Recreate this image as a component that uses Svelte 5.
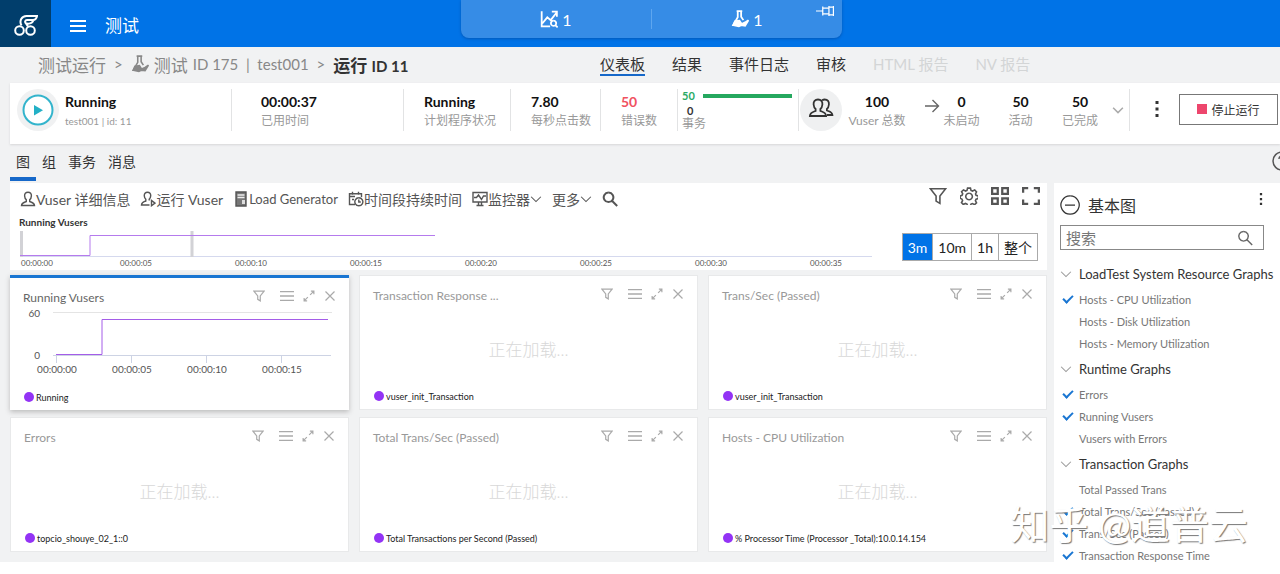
<script>
    const icons = {
        chart: "M1.5 1v13.5H9M2 12l4.5-5.5 3 2.5L15 2M10.5 1.5H15V6M12 9.5a2.3 2.3 0 1 0 .1 0M13.7 13.5l2 2",
        person: "M8 1.2c-2.3 0-3.6 1.5-3.4 3.7.1 1.7.7 3 1.7 3.8v1.8c-2 .9-4.6 1.2-4.8 4h13c-.2-2.8-2.8-3.1-4.8-4V8.7c1-.8 1.6-2.1 1.7-3.8.2-2.2-1.1-3.7-3.4-3.7z",
        vuser: "M9.5 14H1.5c.2-2.8 2.5-3.1 4.3-4V8.2C4.8 7.4 4.4 6.4 4.3 4.9 4.1 2.7 5.4 1.2 7.5 1.2s3.4 1.500 3.200 3.700C10.600 6.400 10.200 7.400 9.200 8.200v1.300M11.500 9.500v5.200l3.500-2.600z",
        calendar: "M7 13.5H1.5V2.8h12V6M4.5.8v3M10.5.8v3M2 5.5h5M4 8.5h2M10.8 6.800a4 4 0 1 0 .1 0M10.800 8.500v2.500h2",
        monitor: "M1 1.5h14v9.5H1zM4.5 14.500h7M6.500 11v3.500M9.500 11v3.500M2 6.500h2.500l2-2.500 3 4.500 2-3.500H14",
        search: "M6.5 1.5a4.8 4.8 0 1 0 .1 0M10.2 10l5 5",
        funnel: "M1.2 1.5h13.6L9.700 8v6.500l-3.400-2V8z",
        gear: "M6.7 1h2.6l.5 2 1.4.6 1.9-1 1.6 1.700-.9 1.900.5 1.200 2 .6v2.200l-2 .6-.6 1.400 1 1.800-1.700 1.700-1.900-1-1.300.5-.6 1.800H6.800l-.6-1.800-1.400-.6-1.800 1-1.700-1.700 1-1.800-.6-1.400-1.500-.6V8l1.600-.6.6-1.400-1-1.800L3.100 2.600l1.800 1L6.200 3zM8 5.500a2.900 2.900 0 1 0 .1 0",
        grid: "M1 1h5v5H1zM10 1h5v5h-5zM1 10h5v5H1zM10 10h5v5h-5z",
        full: "M1 5V1h4.500M10.500 1H15v4M15 11v4h-4.500M5.500 15H1v-4",
        menu: "M0 3h16M0 8h16M0 13h16",
        expand: "M9.5 6.500l5-5M10.500 1.500h4v4M6.500 9.500l-5 5M1.500 10.500v4h4",
        close: "M2 2l12 12M14 2L2 14",
        down: "M1.5 5L8 11.500 14.500 5",
        arrow: "M1 8h13.500M8.500 2l6 6-6 6",
        pin: "M0 8h6M6 4v8M6 5.500h5.500M6 10.500h5.500M11.500 3.500v9M11.500 4.500h4M11.500 11.500h4M15.500 3.500v9",
        minus: "M4 8h8M8 .7a7.3 7.3 0 1 0 .1 0",
    };

    const pages = [
        { name: "仪表板", active: true },
        { name: "结果" },
        { name: "事件日志" },
        { name: "审核" },
        { name: "HTML 报告", disabled: true },
        { name: "NV 报告", disabled: true },
    ];

    const tabs = ["图", "组", "事务", "消息"];
    const ranges = ["3m", "10m", "1h", "整个"];
    const times = ["00:00:05", "00:00:10", "00:00:15", "00:00:20", "00:00:25", "00:00:30", "00:00:35"];

    const tools = [
        { icon: "person", name: "Vuser 详细信息" },
        { icon: "vuser", name: "运行 Vuser" },
        { icon: "server", name: "Load Generator", latin: true },
        { icon: "calendar", name: "时间段持续时间" },
        { icon: "monitor", name: "监控器", more: true },
        { name: "更多", more: true },
    ];

    const cards = [
        { title: "Running Vusers", legend: "Running", chart: true },
        { title: "Transaction Response ...", legend: "vuser_init_Transaction" },
        { title: "Trans/Sec (Passed)", legend: "vuser_init_Transaction" },
        { title: "Errors", legend: "topcio_shouye_02_1::0" },
        { title: "Total Trans/Sec (Passed)", legend: "Total Transactions per Second (Passed)" },
        { title: "Hosts - CPU Utilization", legend: "% Processor Time (Processor _Total):10.0.14.154" },
    ];

    const groups = [
        {
            name: "LoadTest System Resource Graphs",
            items: [
                { name: "Hosts - CPU Utilization", checked: true },
                { name: "Hosts - Disk Utilization", checked: false },
                { name: "Hosts - Memory Utilization", checked: false },
            ],
        },
        {
            name: "Runtime Graphs",
            items: [
                { name: "Errors", checked: true },
                { name: "Running Vusers", checked: true },
                { name: "Vusers with Errors", checked: false },
            ],
        },
        {
            name: "Transaction Graphs",
            items: [
                { name: "Total Passed Trans", checked: false },
                { name: "Total Trans/Sec (Passed)", checked: true },
                { name: "Trans/Sec (Passed)", checked: true },
                { name: "Transaction Response Time", checked: true },
            ],
        },
    ];

    let tab = "图";
    let range = "3m";
    let selected = 0;
</script>

{#snippet icon(name, cls = "")}
    <svg class="icon {cls}" viewBox="0 0 16 16" aria-hidden="true">
        {#if name === "server"}
            <path d="M3 1h10v14H3z" fill="#777" />
            <path d="M4.5 4h7M4.5 6.500h7" stroke="#eee" />
            <path d="M9 9h3v4H9z" fill="#ddd" stroke="none" />
        {:else if name === "flask"}
            <path d="M5 1h5M6 1v5.500L2 13.500h5M9 1v5l2 3" />
            <path d="M3.500 10l4-.5 2 3 3-1.500 3-2-3 5-3.500-.5-2 1-5-1z" fill="currentColor" />
        {:else if name === "dots"}
            <path d="M6.500 0h3v3h-3zM6.500 6.500h3v3h-3zM6.500 13h3v3h-3z" fill="currentColor" stroke="none" />
        {:else}
            <path d={icons[name]} />
        {/if}
    </svg>
{/snippet}

<div class="app">
    <header>
        <div class="brand">
            <a class="logo" href="#home" aria-label="Home">
                <svg viewBox="0 0 24 24">
                    <circle cx="6" cy="16.500" r="4.300" />
                    <circle cx="17" cy="16.500" r="4.300" />
                    <path d="M8 11.500C5.500 7 8 2 13 2h10.500c-.5 2.500-2 4-4 4h-6c-2 0-2.500 2-1 3.500l2 3M13 9.500c3 .5 6-.5 7-3.500" />
                </svg>
            </a>
            <button class="burger" aria-label="Menu">{@render icon("menu")}</button>
            <h1>测试</h1>
        </div>
        <div class="active-runs">
            <button>{@render icon("chart")}1</button>
            <button>{@render icon("flask")}1</button>
            <button class="pin" aria-label="Pin">{@render icon("pin")}</button>
        </div>
    </header>

    <div class="subhead">
        <nav class="crumbs">
            <a href="#runs">测试运行</a>
            <span class="sep">&gt;</span>
            <a href="#test">{@render icon("flask")}测试 <span>ID 175 &nbsp;|&nbsp; test001</span></a>
            <span class="sep">&gt;</span>
            <b>运行 <span>ID 11</span></b>
        </nav>
        <nav class="pages">
            {#each pages as page}
                <a href="#page" class:active={page.active} class:disabled={page.disabled}>{page.name}</a>
            {/each}
        </nav>
    </div>

    <section class="status">
        <div class="cell run">
            <span class="play">
                <svg viewBox="0 0 42 42">
                    <circle cx="21" cy="21" r="21" fill="#f0f1f2" />
                    <circle cx="21" cy="21" r="14.500" fill="#fff" stroke="#33b4cc" stroke-width="2" />
                    <path d="M17 16v10.500l9-5.200z" fill="#23b0c6" />
                </svg>
            </span>
            <div class="stat"><b>Running</b><small class="run-id">test001 | id: 11</small></div>
        </div>
        <div class="cell time"><div class="stat"><b>00:00:37</b><small>已用时间</small></div></div>
        <div class="cell"><div class="stat"><b>Running</b><small>计划程序状况</small></div></div>
        <div class="cell"><div class="stat"><b>7.80</b><small>每秒点击数</small></div></div>
        <div class="cell"><div class="stat"><b class="bad">50</b><small>错误数</small></div></div>
        <div class="cell trans">
            <div class="passed"><b>50</b><span class="bar"></span></div>
            <b>0</b>
            <small>事务</small>
        </div>
        <div class="cell vusers">
            <span class="people">
                <svg viewBox="0 0 42 42">
                    <path d="M18 10.500c-3 0-4.700 2-4.400 5 .2 2 .9 3.600 2 4.500v2c-2.400 1-5.400 1-5.700 5h16.200c-.3-4-3.300-4-5.700-5v-2c1.100-.9 1.800-2.500 2-4.500.3-3-1.400-5-4.400-5z" />
                    <path d="M22 11.300c1-.6 1.700-.8 2.700-.8 3 0 4.500 2 4.200 5-.2 2-.9 3.600-2 4.500v1.500c2.500 1 5.200 1.200 5.500 4.500H27" />
                </svg>
            </span>
            <div class="stat mid"><b>100</b><small>Vuser 总数</small></div>
            {@render icon("arrow", "arrow")}
            <div class="stat mid"><b>0</b><small>未启动</small></div>
            <div class="stat mid"><b>50</b><small>活动</small></div>
            <div class="stat mid"><b>50</b><small>已完成</small></div>
            <button aria-label="Details">{@render icon("down", "chev")}</button>
        </div>
        <div class="actions">
            <button aria-label="More">{@render icon("dots")}</button>
            <button class="stop"><i></i>停止运行</button>
        </div>
    </section>

    <div class="tabs">
        {#each tabs as name}
            <button class:active={tab === name} on:click={() => (tab = name)}>{name}</button>
        {/each}
        <button class="help" aria-label="Help">
            <svg viewBox="0 0 20 20"><circle cx="10" cy="10" r="9" /><path d="M7 8c0-4 6-4 6 0 0 2-3 2-3 4M10 14v1" /></svg>
        </button>
    </div>

    <main>
        <div class="dashboard">
            <section class="panel">
                <div class="toolbar">
                    {#each tools as tool}
                        <button class:latin={tool.latin}>
                            {#if tool.icon}{@render icon(tool.icon)}{/if}{tool.name}{#if tool.more}{@render icon("down", "small")}{/if}
                        </button>
                    {/each}
                    <button aria-label="Search">{@render icon("search", "bold")}</button>
                    <div class="right">
                        {#each ["funnel", "gear", "grid", "full"] as name}
                            <button aria-label={name}>{@render icon(name, name === "grid" || name === "full" ? "bold" : "")}</button>
                        {/each}
                    </div>
                </div>
                <div class="overview">
                    <div class="timeline">
                        <h2>Running Vusers</h2>
                        <svg viewBox="0 0 862 38">
                            <path d="M1 26.500h852" stroke="#d5d9ee" />
                            <path d="M2.500 1v26M173 1v26" stroke="#d2d2d6" stroke-width="3" />
                            <path d="M1 25.500h70v-20h345" stroke="#b57bed" fill="none" />
                            <text x="2" y="36">00:00:00</text>
                            {#each times as time, i}
                                <text x={117 + i * 115} y="36" text-anchor="middle">{time}</text>
                            {/each}
                        </svg>
                    </div>
                    <div class="ranges">
                        {#each ranges as name}
                            <button class:active={range === name} on:click={() => (range = name)}>{name}</button>
                        {/each}
                    </div>
                </div>
            </section>

            <div class="cards">
                {#each cards as card, i}
                    <article class:selected={selected === i}>
                        <div class="card-head">
                            <h3>{card.title}</h3>
                            <button aria-label="Filter">{@render icon("funnel")}</button>
                            <button aria-label="Options">{@render icon("menu", "wide")}</button>
                            <button aria-label="Expand">{@render icon("expand")}</button>
                            <button aria-label="Close">{@render icon("close")}</button>
                        </div>
                        {#if card.chart}
                            <svg class="chart" viewBox="0 4 339 70">
                                <path d="M43 2.500h279" stroke="#e4e4e4" />
                                <path d="M43 45.500h278M46.500 45v8M121.500 45v8M196.500 45v8M271.500 45v8" stroke="#cdd3e4" />
                                <path d="M46 44.500h46v-35h226" stroke="#a45de8" fill="none" />
                                <text x="30" y="7" text-anchor="end">60</text>
                                <text x="30" y="49" text-anchor="end">0</text>
                                {#each ["00:00:00", ...times.slice(0, 3)] as time, n}
                                    <text x={47 + n * 75} y="63" text-anchor="middle">{time}</text>
                                {/each}
                            </svg>
                        {:else}
                            <p class="loading">正在加载...</p>
                        {/if}
                        <div class="legend"><i></i>{card.legend}</div>
                    </article>
                {/each}
            </div>
        </div>

        <aside>
            <div class="side-head">
                <button aria-label="Collapse">{@render icon("minus", "minus")}</button>
                <h2>基本图</h2>
                <button aria-label="More">{@render icon("dots")}</button>
            </div>
            <div class="search">
                <input type="text" placeholder="搜索" aria-label="搜索" />
                {@render icon("search")}
            </div>
            {#each groups as group}
                <div class="group">
                    <button>{@render icon("down")}{group.name}</button>
                    {#each group.items as item}
                        <label><input type="checkbox" bind:checked={item.checked} />{item.name}</label>
                    {/each}
                </div>
            {/each}
        </aside>
    </main>
    <div class="watermark">知乎 @道普云</div>
</div>

<style>
    :global(body) {
        background: #fff;
    }

    .app {
        position: relative;
        overflow: hidden;
        font-family: Lato, "Noto Sans CJK SC", sans-serif;
        font-size: 14px;
        color: #333;
        background: #f1f2f3;
    }

    button {
        display: flex;
        align-items: center;
        padding: 0;
        border: none;
        background: none;
        color: inherit;
        font: inherit;
        white-space: nowrap;
        cursor: pointer;
    }

    a {
        color: inherit;
        text-decoration: none;
    }

    h1,
    h2,
    h3,
    p {
        margin: 0;
        font-weight: 400;
    }

    .icon {
        width: 16px;
        height: 16px;
        flex-shrink: 0;
        fill: none;
        stroke: currentColor;
        stroke-width: 1.4;
    }

    .icon.bold {
        stroke-width: 2;
    }

    header {
        display: flex;
        height: 47px;
        background: #0073e7;
        color: #fff;
    }

    .brand {
        display: flex;
        align-items: center;
        flex: 0 0 36%;
    }

    .logo {
        display: flex;
        align-items: center;
        justify-content: center;
        width: 51px;
        height: 47px;
        background: #013e6c;
    }

    .logo svg {
        width: 25px;
        height: 24px;
        margin-top: 4px;
        fill: none;
        stroke: #fff;
        stroke-width: 2;
    }

    .burger {
        margin: 4px 17px 0;
    }

    .burger .icon {
        width: 20px;
        height: 16px;
        stroke-width: 2;
    }

    h1 {
        margin-top: 2px;
        font-size: 17px;
    }

    .active-runs {
        display: flex;
        align-items: center;
        flex: 0 1 381px;
        height: 38px;
        border-radius: 0 0 8px 8px;
        background: #368ce6;
        box-shadow: 0 1px 3px #0058b8;
    }

    .active-runs button {
        flex: 1;
        justify-content: center;
        gap: 4px;
        height: 20px;
        font-size: 16px;
    }

    .active-runs .icon {
        width: 18px;
        height: 18px;
        stroke-width: 1.6;
    }

    .active-runs button + button {
        border-left: 1px solid #5ea6ef;
    }

    .active-runs .pin {
        flex: none;
        align-self: flex-start;
        margin: 1px 8px 0 -26px;
        border: none;
    }

    .active-runs .pin .icon {
        stroke-width: 1.1;
    }

    .subhead {
        display: flex;
        align-items: center;
        height: 36px;
        color: #888;
    }

    .crumbs {
        display: flex;
        align-items: center;
        gap: 8px;
        flex: 0 0 562px;
        height: 34px;
        padding-left: 38px;
        box-sizing: content-box;
        font-size: 17px;
        align-self: flex-start;
        white-space: nowrap;
    }

    .crumbs a {
        display: flex;
        align-items: center;
        gap: 5px;
    }

    .crumbs b {
        color: #333;
    }

    .crumbs .icon {
        width: 18px;
        height: 18px;
    }

    .crumbs span {
        font-size: 15px;
    }

    .pages {
        display: flex;
        gap: 27px;
        font-size: 15px;
        color: #333;
        white-space: nowrap;
    }

    .pages a {
        line-height: 20px;
        border-bottom: 2px solid transparent;
    }

    .pages .active {
        border-color: #1668c9;
    }

    .pages .disabled {
        color: #d3d5d6;
    }

    .status {
        display: grid;
        grid-template-columns: 222fr 172fr 107fr 90fr 77fr 121fr 331fr 150fr;
        height: 61px;
        margin-left: 10px;
        background: #fff;
        box-shadow: 0 1px 2px #d6d7d8;
    }

    .cell {
        display: flex;
        height: 42px;
        margin-top: 6px;
        padding-left: 20px;
        border-right: 1px solid #e2e3e4;
        box-sizing: border-box;
        min-width: 0;
    }

    .run {
        padding-left: 7px;
        gap: 6px;
    }

    .time {
        padding-left: 29px;
    }

    .play svg,
    .people svg {
        display: block;
        width: 42px;
        height: 42px;
    }

    .stat {
        display: flex;
        flex-direction: column;
        padding-top: 3px;
        white-space: nowrap;
    }

    .stat b {
        color: #111;
        line-height: 20px;
    }

    small {
        color: #999;
        font-size: 12px;
        line-height: 18px;
    }

    .run-id {
        font-size: 10px;
    }

    .stat .bad {
        color: #f0525f;
    }

    .trans {
        flex-direction: column;
        padding: 0 6px 0 4px;
        font-size: 11px;
    }

    .trans b {
        padding-left: 5px;
        line-height: 16px;
    }

    .trans small {
        line-height: 10px;
    }

    .passed {
        display: flex;
        align-items: center;
        gap: 8px;
        height: 14px;
        color: #2aaa65;
    }

    .passed b {
        padding: 0;
    }

    .bar {
        flex: 1;
        height: 4px;
        background: #25a85f;
    }

    .vusers {
        display: grid;
        grid-template-columns: 42px 70px 31px 37px 81px 38px 1fr;
        padding-left: 1px;
    }

    .people {
        border-radius: 50%;
        background: #eff0f1;
    }

    .people svg {
        fill: none;
        stroke: #333;
        stroke-width: 1.8;
    }

    .mid {
        align-items: center;
    }

    .arrow {
        align-self: start;
        justify-self: end;
        margin: 9px 3px 0 0;
        color: #666;
    }

    .chev {
        width: 12px;
        margin-left: 13px;
        color: #aaa;
        stroke-width: 2;
    }

    .actions {
        display: flex;
        align-items: center;
        justify-content: space-between;
        height: 30px;
        margin-top: 11px;
        padding: 0 2px 0 19px;
    }

    .stop {
        justify-content: center;
        gap: 4px;
        width: 99px;
        height: 31px;
        border: 1px solid #777;
        font-size: 12px;
    }

    .stop i {
        width: 10px;
        height: 10px;
        background: #ed466d;
    }

    .tabs {
        display: flex;
        height: 37px;
        padding-left: 10px;
    }

    .tabs button {
        height: 37px;
        padding: 0 6px;
        border-bottom: 4px solid transparent;
        box-sizing: border-box;
    }

    .tabs .active {
        border-color: #1668c9;
    }

    .tabs .help {
        margin: 0 -12px 0 auto;
        padding: 0;
    }

    .help svg {
        width: 20px;
        height: 20px;
        fill: none;
        stroke: #555;
        stroke-width: 1.5;
    }

    main {
        display: flex;
        gap: 7px;
        height: 379px;
        margin-top: 2px;
        padding-left: 10px;
    }

    .dashboard {
        flex: 1;
        min-width: 0;
    }

    .panel {
        height: 87px;
        background: #fff;
    }

    .toolbar {
        display: flex;
        align-items: center;
        gap: 10px;
        height: 32px;
        padding: 0 7px 0 10px;
        color: #555;
    }

    .toolbar .latin {
        font-size: 13px;
    }

    .toolbar .small {
        width: 12px;
    }

    .right {
        display: flex;
        gap: 13px;
        margin: -6px 0 0 auto;
    }

    .right .icon {
        width: 18px;
        height: 18px;
    }

    .overview {
        display: flex;
        justify-content: space-between;
        padding: 0 9px;
    }

    .timeline {
        flex: 0 0 862px;
    }

    .timeline h2 {
        font-size: 10px;
        font-weight: 700;
        line-height: 15px;
    }

    .timeline svg {
        display: block;
        width: 100%;
    }

    .timeline text {
        font-size: 8px;
        fill: #555;
    }

    .ranges {
        display: flex;
        height: 28px;
        margin-top: 18px;
        border: 1px solid #aaa;
        box-sizing: border-box;
    }

    .ranges button {
        padding: 0 5px;
        color: #222;
    }

    .ranges button + button {
        border-left: 1px solid #aaa;
    }

    .ranges .active {
        background: #0073e7;
        color: #fff;
    }

    .cards {
        display: grid;
        grid-template-columns: repeat(3, 1fr);
        grid-auto-rows: 135px;
        gap: 7px 10px;
        margin-top: 5px;
    }

    article {
        display: flex;
        flex-direction: column;
        border: 1px solid #e8e9ea;
        background: #fff;
        box-sizing: border-box;
        min-width: 0;
    }

    article.selected {
        border: none;
        border-top: 3px solid #1a76d2;
        box-shadow: 0 2px 5px #bbb;
    }

    .card-head {
        display: flex;
        align-items: center;
        height: 36px;
        padding: 0 13px;
        color: #aaa;
    }

    .card-head h3 {
        flex: 1;
        padding-top: 2px;
        color: #999;
        font-size: 12px;
    }

    .selected h3 {
        color: #666;
    }

    .card-head button {
        margin-left: 9px;
    }

    .card-head .icon {
        width: 12px;
        height: 12px;
        stroke-width: 1.6;
    }

    .card-head button:nth-of-type(2) {
        margin-left: 15px;
    }

    .card-head .wide {
        width: 14px;
        height: 14px;
    }

    .chart {
        width: 100%;
        flex: 1;
        min-height: 0;
        overflow: visible;
    }

    .chart text {
        font-size: 10px;
        fill: #555;
    }

    .loading {
        flex: 1;
        padding-top: 24px;
        color: #d8d8d8;
        font-size: 17px;
        font-weight: 300;
        line-height: 28px;
        text-align: center;
    }

    .legend {
        display: flex;
        align-items: center;
        gap: 2px;
        height: 26px;
        padding-left: 14px;
        color: #222;
        font-size: 9px;
    }

    .legend i {
        width: 10px;
        height: 10px;
        border-radius: 50%;
        background: #9333f5;
    }

    aside {
        flex: 0 0 226px;
        overflow: hidden;
        padding: 0 16px 0 6px;
        background: #fff;
        box-sizing: border-box;
    }

    .side-head {
        display: flex;
        align-items: center;
        gap: 8px;
        height: 42px;
        padding-top: 2px;
        box-sizing: border-box;
    }

    .side-head .minus {
        width: 20px;
        height: 20px;
        stroke-width: 1;
    }

    .side-head h2 {
        flex: 1;
        font-size: 16px;
    }

    .side-head .icon:not(.minus) {
        width: 12px;
        height: 12px;
        margin: -12px -3px 0 0;
    }

    .search {
        display: flex;
        align-items: center;
        height: 25px;
        margin-bottom: 9px;
        padding: 0 10px 0 5px;
        border: 1px solid #888;
        color: #666;
        box-sizing: border-box;
    }

    .search input {
        flex: 1;
        min-width: 0;
        padding: 0;
        border: none;
        outline: none;
        font: inherit;
        font-size: 15px;
    }

    .search input::placeholder {
        color: #777;
    }

    .group button {
        gap: 7px;
        height: 29px;
        color: #333;
        font-size: 13px;
    }

    .group .icon {
        width: 12px;
        height: 12px;
        color: #999;
    }

    .group label {
        display: flex;
        align-items: center;
        gap: 7px;
        height: 22px;
        color: #777;
        font-size: 11px;
        white-space: nowrap;
    }

    .group input {
        appearance: none;
        width: 12px;
        height: 12px;
        margin: 0;
    }

    .group input:checked::before {
        content: "";
        display: block;
        width: 8px;
        height: 4px;
        margin: 2px 0 0 3px;
        border: solid #1a76d2;
        border-width: 0 0 2px 2px;
        transform: rotate(-45deg);
    }

    .watermark {
        position: absolute;
        right: 32px;
        bottom: 10px;
        color: #fff;
        font-size: 39px;
        line-height: 56px;
        text-shadow: 1px 1px 1px #777;
        pointer-events: none;
    }
</style>
